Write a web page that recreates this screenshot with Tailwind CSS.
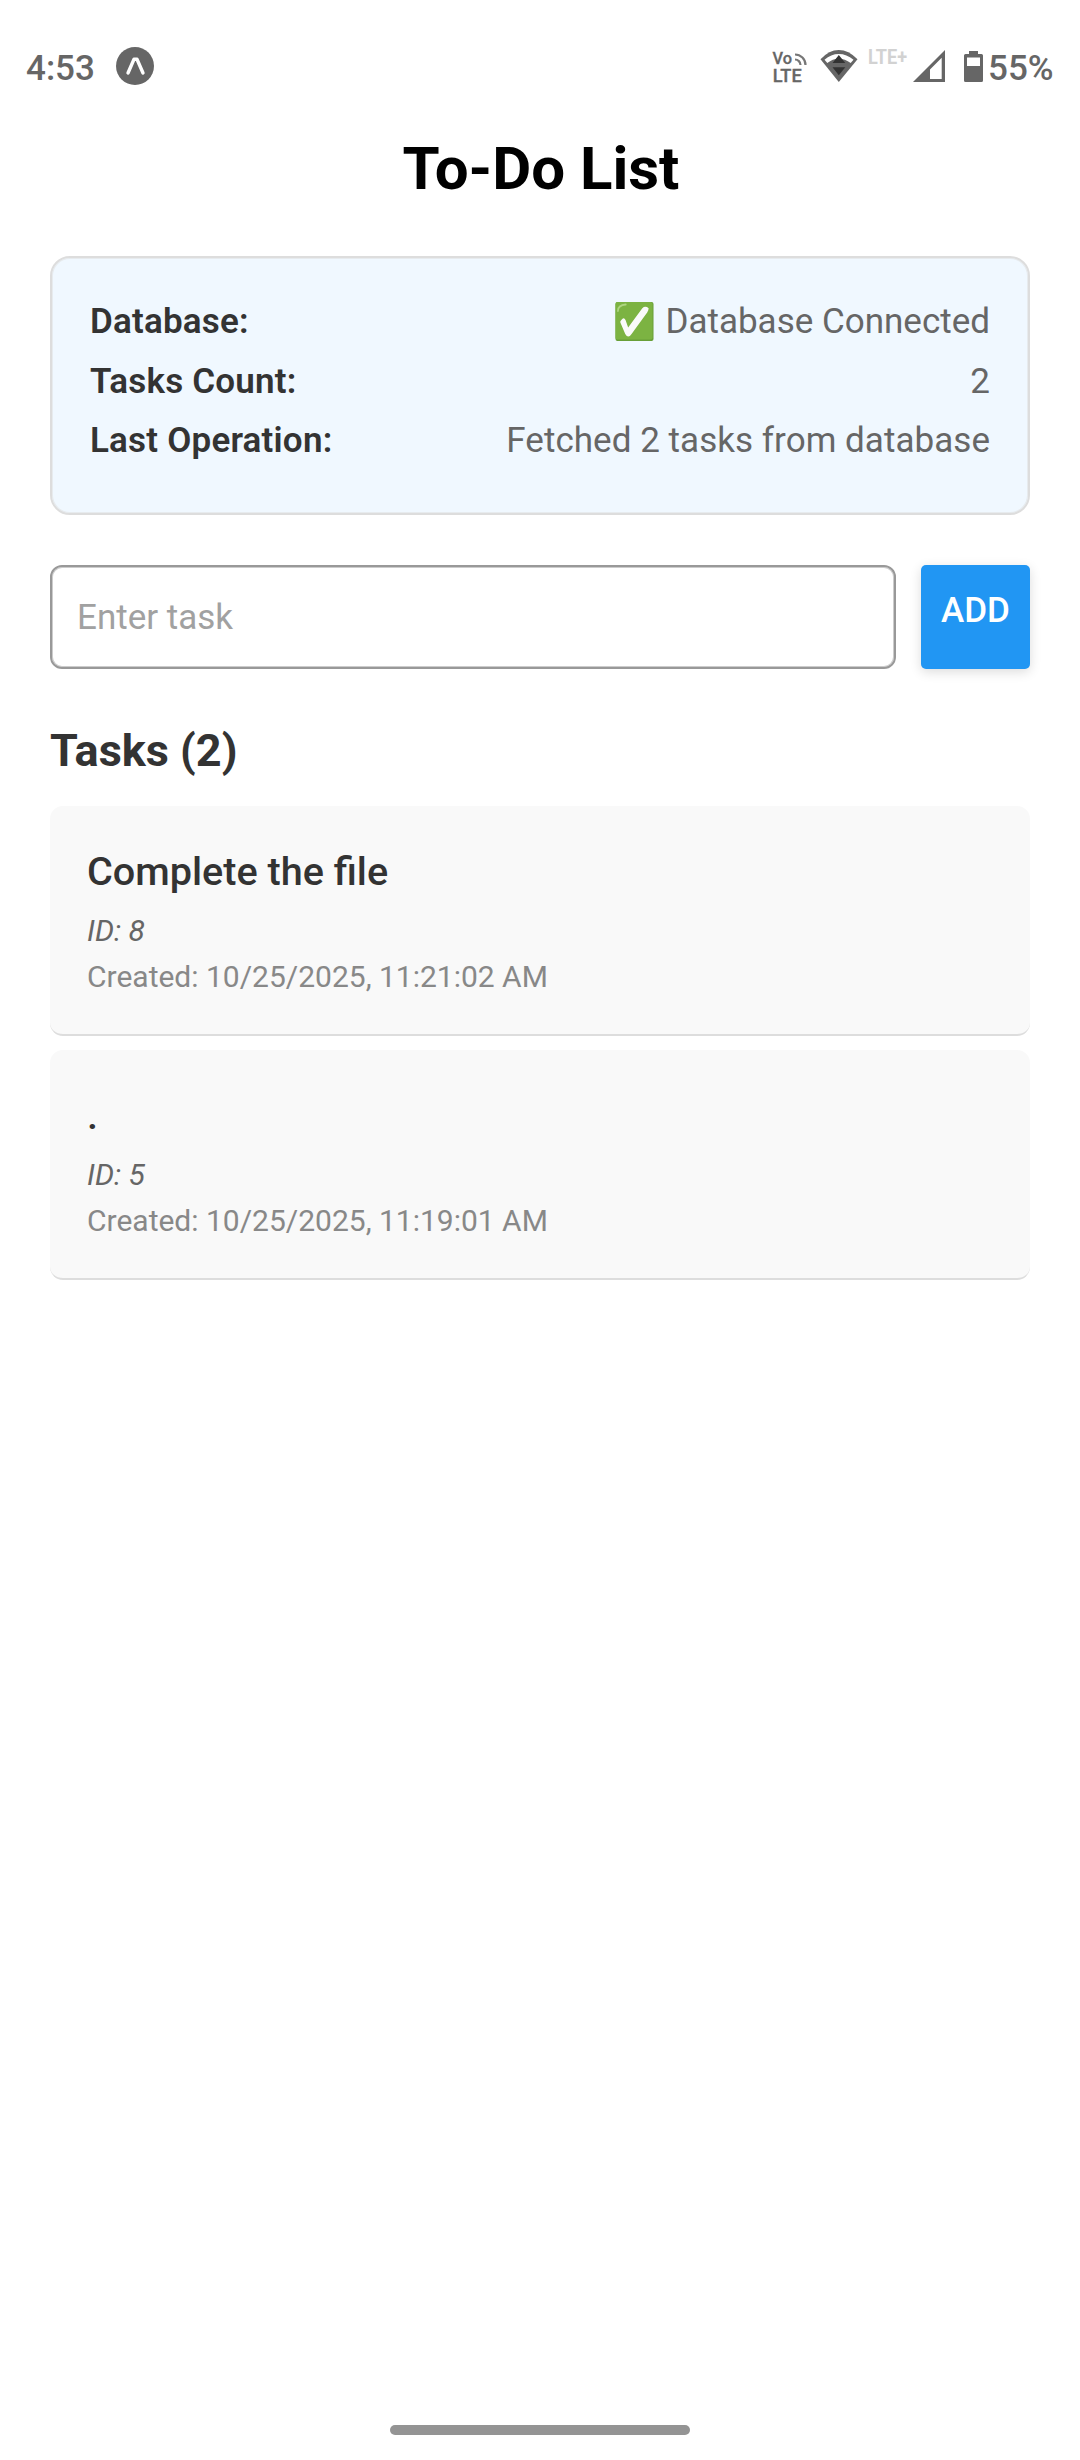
<!DOCTYPE html>
<html lang="en">
<head>
<meta charset="utf-8">
<title>To-Do List</title>
<script src="https://cdn.jsdelivr.net/npm/@tailwindcss/browser@4"></script>
</head>
<body class="bg-white">
<div class="w-[1080px] h-[2460px] bg-white flex flex-col overflow-hidden font-[Roboto,sans-serif] text-[35px] text-[#333]">

  <!-- Status bar -->
  <header class="h-[134px] shrink-0 flex justify-between pt-12 pl-[26px] pr-[28px] text-[#666] font-medium leading-[42px]">
    <div class="flex">
      <span class="w-[90px]">4:53</span>
      <svg class="-mt-px" width="38" height="38" viewBox="0 0 38 38"><circle cx="19" cy="19" r="19" fill="#666"/><path d="M12 26 18 12.300h3L27 26" fill="none" stroke="#fff" stroke-width="3.400" stroke-linecap="round" stroke-linejoin="round"/></svg>
    </div>
    <div class="flex">
      <svg class="-mt-2" width="220" height="50" viewBox="770 40 220 50" font-family="Roboto, sans-serif">
        <!-- VoLTE -->
        <text x="772.500" y="64" font-size="16.500" font-weight="500" fill="#666" stroke="#666" stroke-width=".3" textLength="19.500" lengthAdjust="spacingAndGlyphs">Vo</text>
        <text x="772.700" y="81.500" font-size="17.500" font-weight="500" fill="#666" stroke="#666" stroke-width=".3" textLength="29" lengthAdjust="spacingAndGlyphs">LTE</text>
        <path d="M795 54.500a10.500 10.500 0 0 1 10.500 10.500M795 59.500a5.500 5.500 0 0 1 5.500 5.500" fill="none" stroke="#777" stroke-width="2.200"/>
        <!-- Wi-Fi -->
        <path d="M820.500 59.300Q829 50 838.800 50T857.500 59.300L838.800 82Z" fill="#666"/>
        <path d="M824.500 59.800Q831 54 838.800 54T853.500 59.800L850.700 63Q845 58.700 838.800 58.700T827.300 63Z" fill="#fff"/>
        <path d="M832.500 63 838.800 55 845.300 63ZM832.500 67.300H845.300L838.800 75.300Z" fill="#333"/>
        <!-- Network type -->
        <text x="868" y="64" font-size="19.500" font-weight="700" fill="#d2d2d2" textLength="39" lengthAdjust="spacingAndGlyphs">LTE+</text>
        <!-- Signal -->
        <path fill-rule="evenodd" d="M913 82 945 50V82ZM930 69.500V79H941.700V57.800Z" fill="#666"/>
        <!-- Battery -->
        <path fill-rule="evenodd" d="M969 51h9v3h3.500q1.500 0 1.500 1.500V80.500q0 1.500-1.500 1.500H965.500q-1.500 0-1.500-1.500V55.500q0-1.500 1.500-1.500H969ZM967 57.500V66H980V57.500Z" fill="#666"/>
      </svg>
      <span class="w-[64px] whitespace-nowrap -ml-[2px]">55%</span>
    </div>
  </header>

  <main class="px-[50px] flex flex-col">
    <h1 class="text-[60px] leading-[70px] font-bold text-black text-center pl-[2px] mb-[52px]">To-Do List</h1>

    <!-- Database status -->
    <section class="h-[259px] rounded-[20px] border-2 border-[#ddd] bg-[#f0f8ff] shadow-[inset_0_0_0_1px_#e7ebee] px-[38px] pt-10 leading-[48px]">
      <div class="flex justify-between mb-3">
        <span class="font-semibold tracking-[0.2px]">Database:</span>
        <span class="flex text-[#666]">
          <svg class="mt-1 mr-[11px] -ml-1" width="39" height="39" viewBox="0 0 40 39" preserveAspectRatio="none"><rect x=".5" y="0" width="39" height="39" rx="2" fill="#689f38"/><rect x=".5" y="0" width="38" height="37.500" rx="2" fill="#7cb342"/><path d="M3 9Q3 3 11 2.500" fill="none" stroke="#aed581" stroke-width="1.800" stroke-linecap="round"/><path d="M6.500 18Q9 14.500 10.800 18L13.500 25.500 28 6.200Q31 3.500 34.500 6.200 34.500 8 33 10.500L17 32Q13.500 37 10.500 32L5.500 20.500Q5 19 6.500 18Z" fill="#fafafa"/></svg>
          <span>Database Connected</span>
        </span>
      </div>
      <div class="flex justify-between mb-[11px]">
        <span class="font-semibold tracking-[0.2px]">Tasks Count:</span>
        <span class="text-[#666]">2</span>
      </div>
      <div class="flex justify-between">
        <span class="font-semibold tracking-[0.2px]">Last Operation:</span>
        <span class="text-[#666] tracking-[0.04px]">Fetched 2 tasks from database</span>
      </div>
    </section>

    <!-- New task -->
    <div class="flex gap-[25px] mt-[50px] h-[104px]">
      <div class="flex-1 rounded-[12px] border-2 border-[#999] shadow-[inset_0_0_0_1px_#ccc] pl-[25px] pt-[27px] leading-[48px] text-[#a1a1a1]">Enter task</div>
      <div class="w-[109px] rounded-[5px] bg-[#2196f3] shadow-[0_3px_12px_rgba(0,0,0,0.14)] text-white text-center font-medium pt-[22px] leading-[48px]">ADD</div>
    </div>

    <h2 class="text-[45px] leading-[54px] font-bold mt-[55px] mb-[28px]">Tasks (2)</h2>

    <!-- Task list -->
    <ul class="flex flex-col gap-[14px]">
      <li class="h-[230px] rounded-[13px] bg-[#f9f9f9] border-b-2 border-[#ddd] px-[37px] pt-[42px]">
        <p class="text-[39.6px] leading-[48px] font-medium">Complete the file</p>
        <p class="text-[30px] leading-9 italic text-[#666] mt-[17px]">ID: 8</p>
        <p class="text-[30px] leading-9 text-[#888] mt-[10px]">Created: 10/25/2025, 11:21:02 AM</p>
      </li>
      <li class="h-[230px] rounded-[13px] bg-[#f9f9f9] border-b-2 border-[#ddd] px-[37px] pt-[42px]">
        <p class="text-[39.6px] leading-[48px] font-medium">.</p>
        <p class="text-[30px] leading-9 italic text-[#666] mt-[17px]">ID: 5</p>
        <p class="text-[30px] leading-9 text-[#888] mt-[10px]">Created: 10/25/2025, 11:19:01 AM</p>
      </li>
    </ul>
  </main>

  <!-- Gesture bar -->
  <div class="mt-auto mb-[25px] self-center w-[300px] h-[10px] rounded-full bg-[#949494]"></div>
</div>
</body>
</html>
